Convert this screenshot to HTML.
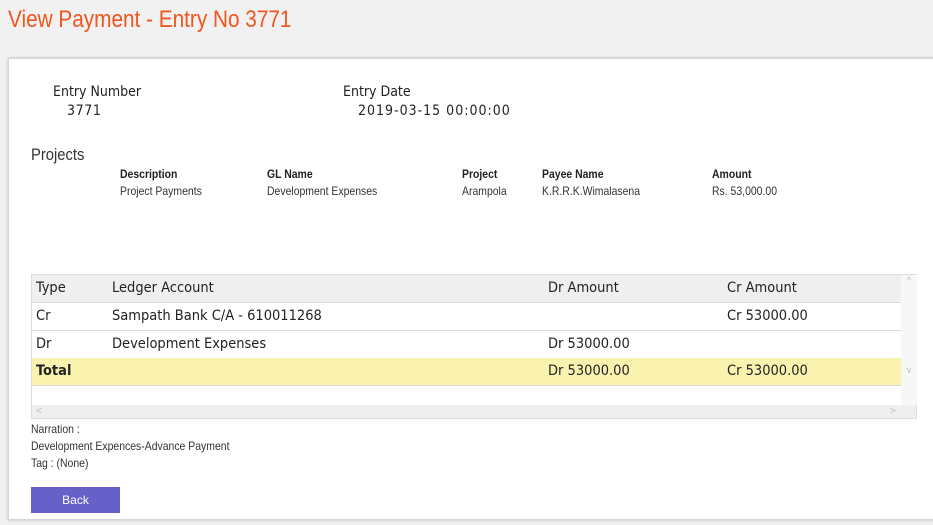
<!DOCTYPE html>
<html><head><meta charset="utf-8"><style>
body{margin:0;width:933px;height:525px;background:#f1f1f1;overflow:hidden;font-family:"Liberation Sans",sans-serif;position:relative}
.t{position:absolute;white-space:nowrap;transform-origin:0 0}
.n{transform:scaleX(0.87)}
h1{position:absolute;left:8px;top:6px;margin:0;font-weight:normal;font-size:24px;color:#f0561d;white-space:nowrap;transform:scaleX(0.865);transform-origin:0 0}
.card{position:absolute;left:8px;top:58px;width:940px;height:460px;background:#fff;border:1px solid #d6d6d6;box-shadow:0 0 3px #bbb}
.dv{font-family:"DejaVu Sans Condensed","DejaVu Sans",sans-serif;font-size:14px;color:#222}
.sm{font-size:12px;color:#333}
.b{font-weight:bold;color:#222}
.tbl{position:absolute;left:31px;top:274px;width:886px;height:145px;background:#efefef;border:1px solid #ddd;box-sizing:border-box}
.row{position:absolute;left:0;width:869px;height:27px;border-bottom:1px solid #d8d8d8;background:#fff;font-size:14.5px}
.row span{position:absolute;top:5px;white-space:nowrap}
</style></head><body>
<h1>View Payment - Entry No 3771</h1>
<div class="card"></div>
<div class="t dv" style="left:53px;top:84px">Entry Number</div>
<div class="t dv" style="left:67px;top:103px;letter-spacing:0.6px">3771</div>
<div class="t dv" style="left:343px;top:84px">Entry Date</div>
<div class="t dv" style="left:358px;top:103px;letter-spacing:1px">2019-03-15 00:00:00</div>
<div class="t n" style="left:31px;top:145px;font-size:17px;color:#333">Projects</div>
<div class="t sm b n" style="left:120px;top:167px">Description</div>
<div class="t sm n" style="left:120px;top:184px">Project Payments</div>
<div class="t sm b n" style="left:267px;top:167px">GL Name</div>
<div class="t sm n" style="left:267px;top:184px">Development Expenses</div>
<div class="t sm b n" style="left:462px;top:167px">Project</div>
<div class="t sm n" style="left:462px;top:184px">Arampola</div>
<div class="t sm b n" style="left:542px;top:167px">Payee Name</div>
<div class="t sm n" style="left:542px;top:184px">K.R.R.K.Wimalasena</div>
<div class="t sm b n" style="left:712px;top:167px">Amount</div>
<div class="t sm n" style="left:712px;top:184px">Rs. 53,000.00</div>
<div class="tbl">
 <div class="row dv" style="top:0;background:#efefef;height:27px;font-size:14.5px"><span style="left:4px">Type</span><span style="left:80px">Ledger Account</span><span style="left:516px">Dr Amount</span><span style="left:695px">Cr Amount</span></div>
 <div class="row dv" style="top:28px;font-size:14.5px"><span style="left:4px">Cr</span><span style="left:80px">Sampath Bank C/A - 610011268</span><span style="left:695px">Cr 53000.00</span></div>
 <div class="row dv" style="top:56px;font-size:14.5px"><span style="left:4px">Dr</span><span style="left:80px">Development Expenses</span><span style="left:516px">Dr 53000.00</span></div>
 <div class="row dv" style="top:83px;background:#faf3b0;font-size:14.5px"><span style="left:4px;font-weight:bold">Total</span><span style="left:516px">Dr 53000.00</span><span style="left:695px">Cr 53000.00</span></div>
 <div style="position:absolute;left:0;top:111px;width:869px;height:19px;background:#fff"></div>
 <div style="position:absolute;left:869px;top:0;width:16px;height:130px;background:#f7f7f7;color:#bbb;font-size:9px;text-align:center">^<br><br><br><br><br><br><br><br><br>v</div>
 <div style="position:absolute;left:4px;top:131px;color:#bbb;font-size:10px">&lt;</div>
 <div style="position:absolute;left:858px;top:131px;color:#bbb;font-size:10px">&gt;</div>
</div>
<div class="t sm n" style="left:31px;top:422px">Narration :</div>
<div class="t sm n" style="left:31px;top:439px">Development Expences-Advance Payment</div>
<div class="t sm n" style="left:31px;top:456px">Tag : (None)</div>
<div style="position:absolute;left:31px;top:487px;width:89px;height:26px;background:#6661c9;color:#fff;font-size:12px;text-align:center;line-height:26px">Back</div>
</body></html>
